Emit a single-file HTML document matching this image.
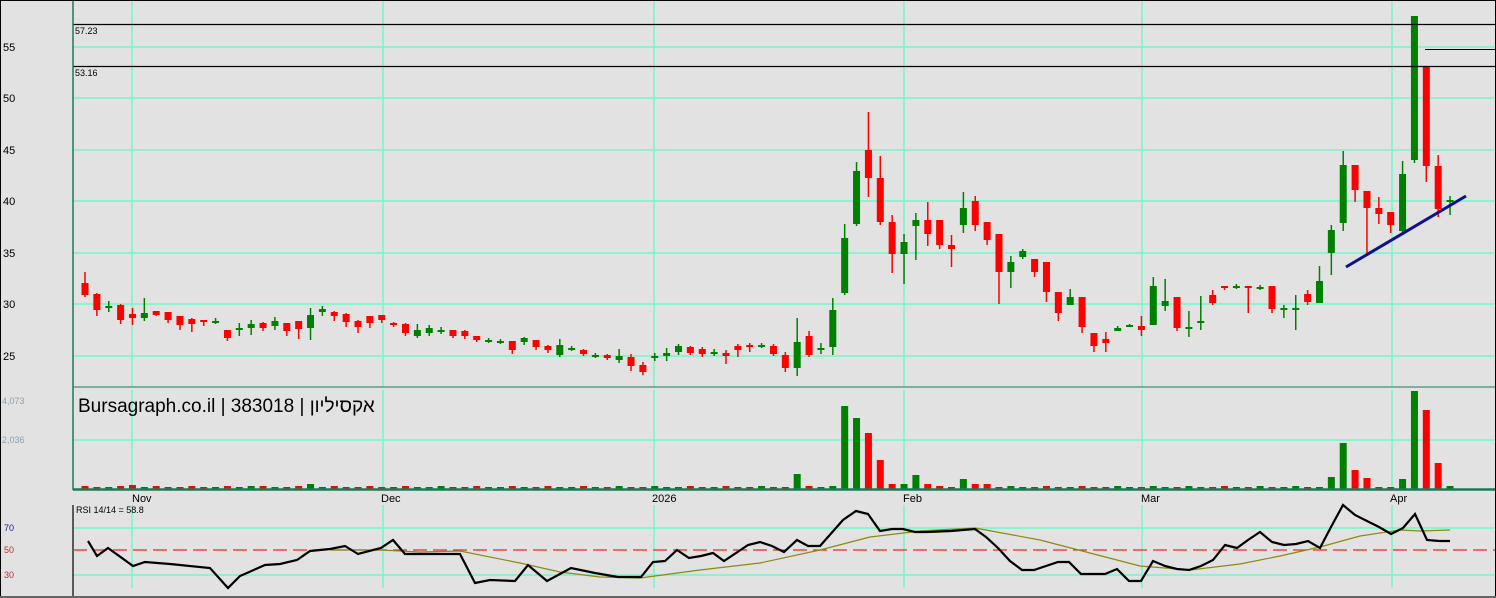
<!DOCTYPE html>
<html><head><meta charset="utf-8"><style>
html,body{margin:0;padding:0;background:#e2e2e2;}
svg{display:block;font-family:"Liberation Sans","Noto Sans CJK JP",sans-serif;}
</style></head><body>
<svg id="c" width="1496" height="598" xmlns="http://www.w3.org/2000/svg">
<rect x="0" y="0" width="1496" height="598" fill="#e2e2e2"/>
<g id="grid" stroke="#72f7c8" stroke-width="1.5"></g>
<g id="cand"></g>
<g id="vol"></g>
<g fill="#000" font-size="11">
<text x="3" y="51">55</text><text x="3" y="102">50</text><text x="3" y="154">45</text><text x="3" y="205">40</text><text x="3" y="257">35</text><text x="3" y="308">30</text><text x="3" y="360">25</text>
<text x="75" y="34" font-size="9">57.23</text><text x="75" y="76" font-size="9">53.16</text>
<text x="132" y="502">Nov</text><text x="381" y="502">Dec</text><text x="652" y="502">2026</text><text x="903" y="502">Feb</text><text x="1141" y="502">Mar</text><text x="1390" y="502">Apr</text>
<text x="76" y="513" font-size="9">RSI 14/14 = 58.8</text>
</g>
<g fill="#8fa0b0" font-size="9"><text x="2" y="404">4,073</text><text x="2" y="443">2,036</text></g>
<g fill="#1a1aa0" font-size="9"><text x="4" y="531">70</text><text x="4" y="553" fill="#c03030">50</text><text x="4" y="578" fill="#c03030">30</text></g>
<text x="78" y="412" font-size="19" fill="#000">Bursagraph.co.il | 383018 | אקסיליון</text>
<line x1="73" y1="24.5" x2="1495" y2="24.5" stroke="#000" stroke-width="1.2"/>
<line x1="73" y1="66.5" x2="1495" y2="66.5" stroke="#000" stroke-width="1.2"/>
<line x1="1425" y1="49.5" x2="1495" y2="49.5" stroke="#000" stroke-width="1"/>
<line x1="1346" y1="267" x2="1466" y2="196" stroke="#10108a" stroke-width="3"/>
<line x1="73" y1="0" x2="73" y2="387" stroke="#1a7a5a" stroke-width="1.5"/>
<line x1="73" y1="387" x2="1495" y2="387" stroke="#1a7a5a" stroke-width="1"/>
<line x1="73" y1="387" x2="73" y2="490" stroke="#1a7a5a" stroke-width="1.5"/>
<line x1="73" y1="489.5" x2="1495" y2="489.5" stroke="#1a7a5a" stroke-width="2.5"/>
<line x1="73" y1="505" x2="73" y2="596" stroke="#000" stroke-width="1.2"/>
<line x1="73" y1="550" x2="1495" y2="550" stroke="#ff2020" stroke-width="1.3" stroke-dasharray="14,6"/>
<polyline id="ma" fill="none" stroke="#8a8a10" stroke-width="1.2"/>
<polyline id="rsi" fill="none" stroke="#000" stroke-width="2.2"/>
<rect x="0.5" y="0.5" width="1495" height="597" fill="none" stroke="#000" stroke-width="1"/>
<line x1="0" y1="597" x2="1496" y2="597" stroke="#666" stroke-width="2"/>
</svg>
<script>
var NS="http://www.w3.org/2000/svg";
function el(p,t,a){var e=document.createElementNS(NS,t);for(var k in a)e.setAttribute(k,a[k]);p.appendChild(e);return e;}
var g=document.getElementById('grid');
[47,98,150,201,253,304,356].forEach(function(y){el(g,'line',{x1:73,y1:y,x2:1495,y2:y});});
el(g,'line',{x1:73,y1:440,x2:1495,y2:440});
[528,575].forEach(function(y){el(g,'line',{x1:73,y1:y,x2:1495,y2:y});});
[132,383,654,904,1142,1392].forEach(function(x){el(g,'line',{x1:x,y1:0,x2:x,y2:387});el(g,'line',{x1:x,y1:390,x2:x,y2:488});el(g,'line',{x1:x,y1:505,x2:x,y2:588});});
var C=[
['r',283,295,272,297],['r',294,310,293,316],['g',306,307,301,312],['r',305,320,304,324],['r',314,318,308,325],['g',313,318,298,321],['r',311,315,311,316],['r',312,320,312,323],['r',316,325,316,330],['r',319,324,318,332],['r',320,322,320,326],['g',321,322,318,324],
['r',330,338,330,341],['g',328,329,323,336],['g',324,328,320,335],['r',323,328,322,331],['g',321,326,317,330],['r',323,331,323,336],['r',321,329,321,339],['g',315,328,308,340],['g',309,312,306,316],['r',312,316,311,321],['r',314,322,313,327],['r',321,327,320,333],['r',316,323,316,328],['r',315,320,315,323],
['r',323,324,322,327],['r',324,333,323,336],['g',330,336,324,338],['g',328,333,325,336],['g',330,331,327,334],['r',330,336,330,338],['r',331,336,330,339],['r',336,340,336,342],['g',340,341,338,343],['g',341,342,339,344],['r',341,350,341,354],['g',338,342,337,345],['r',340,347,340,350],['r',346,350,345,353],['g',345,355,339,357],['g',348,349,346,351],['r',350,354,349,356],['g',355,356,353,358],['r',355,358,354,360],['g',356,360,349,363],['r',357,366,354,371],['r',365,372,362,375],
['g',356,357,353,361],['g',353,356,348,361],['g',346,352,344,355],['r',347,353,346,355],['r',349,354,347,357],['g',352,353,349,356],['r',353,356,350,364],['r',346,350,344,357],['r',345,347,343,352],['g',345,346,343,348],['r',346,354,344,356],['r',355,368,352,372],['g',342,368,318,376],['r',336,355,331,357],['g',348,349,343,354],['g',310,347,298,355],
['g',238,293,224,295],['g',171,224,162,226],['r',150,178,112,197],['r',178,222,156,225],['r',222,254,215,273],['g',242,254,234,284],['g',220,226,213,260],['r',220,234,202,246],['r',220,245,220,249],['r',245,249,235,267],['g',208,225,192,233],['r',201,225,196,231],['r',222,240,222,245],['r',234,272,234,304],['g',262,272,256,288],['g',251,257,249,259],['r',259,272,259,277],['r',262,292,262,302],['r',292,313,292,321],['g',297,305,289,305],['r',297,327,297,333],['r',333,346,333,352],['r',339,343,332,352],['g',328,331,326,331],['g',325,326,324,327],['r',326,330,316,336],
['g',286,325,277,325],['g',301,306,279,311],['r',297,328,297,331],['g',327,328,311,337],['g',321,323,296,330],['r',295,303,290,305],['r',286,287,286,290],['g',286,288,284,289],['r',286,288,286,313],['g',287,289,285,290],['r',286,309,286,313],['g',308,310,305,318],['g',308,310,295,330],['r',294,302,290,305],['g',281,303,266,303],['g',230,253,225,275],
['g',165,223,151,231],['r',165,190,165,202],['r',191,208,191,255],['r',208,214,197,224],['r',212,225,212,233],['g',174,231,161,235],['g',16,160,16,163],['r',66,166,66,182],['r',166,209,155,217],['g',200,202,196,215]
];
var cg=document.getElementById('cand'),vg=document.getElementById('vol');
var big={60:474,61:486,64:406,65:418,66:433,67:460,68:484,69:484,70:475,71:484,74:479,75:484,76:484,105:477,106:443,107:470,108:478,111:479,112:391,113:410,114:463,115:486,19:484,4:485,14:486};
C.forEach(function(d,i){
 var x=85+i*11.87,col=d[0]=='g'?'#008000':'#ff0000';
 el(cg,'line',{x1:x,y1:d[3],x2:x,y2:d[4],stroke:col,'stroke-width':1.5});
 var h=Math.max(d[2]-d[1],2);
 el(cg,'rect',{x:x-3.5,y:d[1],width:7,height:h,fill:col});
 var vy=big[i]||(487-(i%3==0?1:0));
 el(vg,'rect',{x:x-3.5,y:vy,width:7,height:489-vy,fill:col});
});
var R=[[88,541],[97,556],[108,548],[133,566],[145,562],[170,564],[210,568],[228,588],[240,576],[265,565],[280,564],[297,560],[310,551],[330,549],[345,546],[358,554],[381,548],[393,540],[405,554],[418,554],[460,554],[475,583],[490,580],[515,581],[528,565],[547,581],[571,568],[595,573],[618,577],[641,577],[653,562],[665,561],[677,550],[689,558],[701,556],[713,553],[724,561],[748,545],[760,542],[772,546],[784,552],[797,540],[808,546],[820,546],[843,520],[856,511],[868,514],[880,531],[892,529],[903,529],[915,532],[927,532],[951,531],[975,529],[986,537],[998,548],[1010,561],[1022,570],[1034,570],[1046,566],[1058,562],[1069,562],[1081,574],[1105,574],[1117,569],[1129,581],[1141,581],[1153,561],[1165,566],[1177,569],[1189,570],[1201,566],[1213,560],[1225,545],[1237,548],[1248,540],[1260,532],[1272,542],[1284,545],[1296,544],[1308,541],[1320,548],[1331,527],[1343,505],[1355,515],[1367,521],[1379,527],[1391,534],[1403,528],[1415,514],[1427,540],[1439,541],[1450,541]];
document.getElementById('rsi').setAttribute('points',R.map(function(p){return p.join(',')}).join(' '));
var M=[[330,550],[380,550],[420,552],[460,551],[520,563],[560,572],[600,577],[640,578],[700,570],[760,563],[820,550],[870,537],[920,531],[975,528],[1040,540],[1090,553],[1140,566],[1190,570],[1240,564],[1280,556],[1320,547],[1360,536],[1400,530],[1420,531],[1450,530]];
document.getElementById('ma').setAttribute('points',M.map(function(p){return p.join(',')}).join(' '));
</script>
</body></html>
